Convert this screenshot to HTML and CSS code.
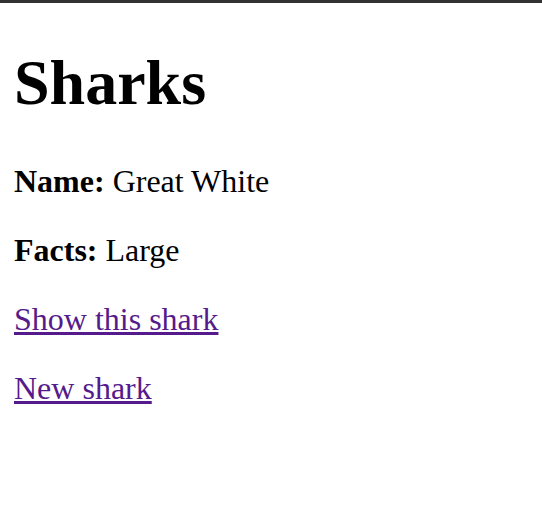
FILE: index.html
```html
<!DOCTYPE html>
<html>
<head>
<meta charset="utf-8">
<link rel="stylesheet" href="styles.css">
</head>
<body>
<div class="topbar"></div>
<main class="page">
<h1 class="title">Sharks</h1>
<p class="field"><strong>Name:</strong> Great White</p>
<p class="field"><strong>Facts:</strong> Large</p>
<p class="field"><a class="link" href="#">Show this shark</a></p>
<p class="field"><a class="link" href="#">New shark</a></p>
</main>
</body>
</html>
```
FILE: styles.css
```css
html, body {
  margin: 0;
  padding: 0;
  background: #fff;
}
body {
  font-family: "Liberation Serif", "Times New Roman", serif;
  color: #000;
}
.topbar {
  height: 3px;
  background: #333;
}
.page {
  padding: 0 14px;
}
.title {
  font-size: 64px;
  font-weight: bold;
  margin: 43px 0;
}
.field {
  font-size: 32px;
  margin: 32px 0;
}
.link {
  color: #551a8b;
}
```
